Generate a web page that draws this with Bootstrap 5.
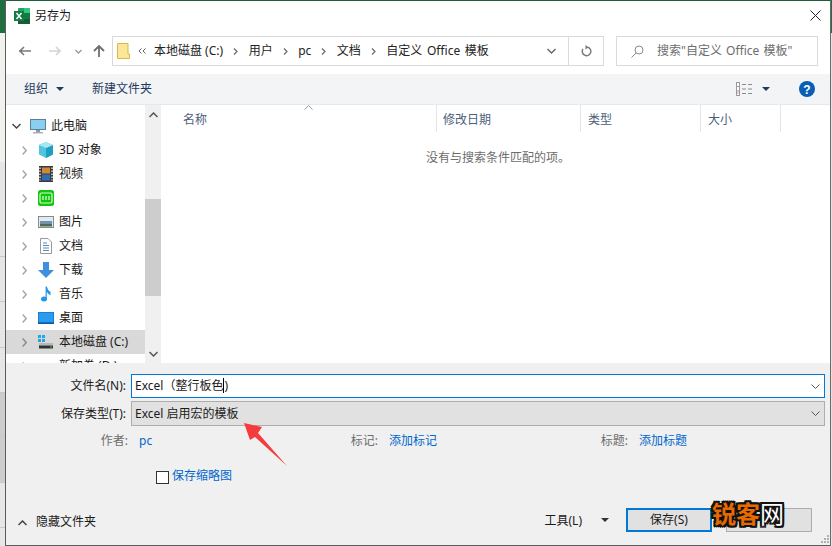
<!DOCTYPE html>
<html lang="zh-CN">
<head>
    <meta charset="UTF-8">
    <title>另存为</title>
    <link href="https://cdn.jsdelivr.net/npm/bootstrap@5.3.0/dist/css/bootstrap.min.css" rel="stylesheet">
    <style>
        html, body { width: 832px; height: 546px; overflow: hidden; }
        body { background: #e6e6e6; font: 12px/16px "Noto Sans", "Noto Sans CJK SC", sans-serif; color: #1a1a1a; position: relative; }
        svg { display: block; flex: none; }
        /* 窗口后面露出的 Excel 表格 */
        .back-strip { position: absolute; left: 0; top: 0; width: 5px; height: 546px; }
        .back-strip div { border-bottom: 1px solid #c8c8c8; }
        .bs-green { height: 33px; background: #1e6e42; border: 0 !important; }
        .bs-light { height: 129px; background: #f3f1ee; border: 0 !important; }
        .bs-a { height: 95px; background: #e6e6e6; }
        .bs-b { height: 45px; background: #e6e6e6; }
        .bs-c { height: 46px; background: #e6e6e6; }
        .bs-d { height: 45px; background: #e6e6e6; }
        .bs-e { height: 44px; background: #cdcdcd; }
        .bs-f { height: 46px; background: #cdcdcd; }
        .bs-g { height: 45px; background: #e6e6e6; }
        .right-strip { position: absolute; left: 831px; top: 33px; width: 1px; height: 513px; background: #e4e2e2; }
        .right-green { position: absolute; left: 826px; top: 0; width: 6px; height: 33px; background: #1e6e42; }
        .dlg { position: relative; margin-left: 5px; width: 826px; height: 546px; background: #fff; border-left: 1px solid #5c5c5c; border-right: 1px solid #6a6a6a; border-top: 1px solid #1e5c3a; border-bottom: 1px solid #5c5c5c; display: flex; flex-direction: column; }
        .title-row { height: 32px; padding: 0 9px 3px 8px; gap: 5px; }
        .addr-row { height: 41px; padding: 3px 12px 8px 13px; }
        .nav-fwd { margin-left: 18px; }
        .nav-down { margin-left: 14px; }
        .nav-up { margin-left: 11px; }
        .addr-box { width: 492px; height: 30px; margin-left: 7px; border: 1px solid #d9d9d9; padding-left: 4px; }
        .crumb { color: #222; margin-left: 10.500px; }
        .crumb-first { margin-left: 8px; }
        .crumb-last { word-spacing: 1.500px; }
        .crumb-sep { margin-left: 10px; }
        .addr-drop { margin-left: auto; width: 34px; height: 28px; border-right: 1px solid #d9d9d9; }
        .addr-ref { width: 34px; height: 28px; }
        .search-box { width: 202px; height: 30px; margin-left: 12px; border: 1px solid #d9d9d9; color: #6d6d6d; padding-left: 14px; gap: 13px; word-spacing: 1px; }
        .tool-row { height: 31px; background: #f3f4f6; border-bottom: 1px solid #e8e8e8; padding: 0 15px 0 18px; color: #1e3a5f; }
        .tool-new { margin-left: 28px; }
        .main-row { height: 258px; }
        .nav-pane { width: 139px; height: 258px; overflow: hidden; padding-top: 9px; flex: none; }
        .tree-row { height: 24px; padding-left: 6px; gap: 5px; }
        .tree-row > svg:first-child { margin-right: 4px; }
        .tree-row.indent { padding-left: 16px; }
        .tree-row.indent > svg:first-child { margin-right: 6px; }
        .tree-row.sel { background: #d9d9d9; }
        .scroll-pane { width: 16px; height: 258px; background: #f0f0f0; flex: none; }
        .scroll-top { height: 20px; }
        .scroll-thumb { height: 97px; margin-top: 74px; background: #cdcdcd; }
        .scroll-foot { height: 18px; margin-top: auto; }
        .list-pane { flex: 1; padding-left: 2px; }
        .head-row { height: 27px; position: relative; color: #4c607a; }
        .col-cell { height: 27px; padding: 3px 0 0 7px; border-right: 1px solid #e5e5e5; }
        .c-name { width: 274px; padding-left: 20px; }
        .c-date { width: 144px; padding-left: 6px; }
        .c-type { width: 120px; }
        .c-size { width: 80px; }
        .sort-mark { position: absolute; left: 141px; top: 0; }
        .empty-msg { color: #6d6d6d; text-align: center; margin: 18px 0 0 10px; width: 650px; }
        .panel { flex: 1; background: #f0f0f0; position: relative; }
        .form-lab { width: 120px; text-align: right; }
        .file-input { width: 694px; height: 24px; margin-left: 5px; background: #fff; border: 1px solid #0078d7; padding-left: 3px; }
        .type-input { width: 694px; height: 25px; margin-left: 5px; background: #e1e1e1; border: 1px solid #adadad; padding-left: 3px; }
        .line-file { margin-top: 11px; }
        .line-type { margin-top: 3px; }
        .caret-bar { display: inline-block; width: 1px; height: 15px; background: #000; vertical-align: -3px; }
        .meta-row { height: 16px; margin-top: 7px; color: #6d6d6d; }
        .meta-cell { width: 250px; }
        .meta-lab { width: 122px; text-align: right; }
        .meta-val { color: #0066cc; margin-left: 11px; }
        .thumb-row { margin: 19px 0 0 150px; height: 16px; gap: 3px; }
        .box-chk { width: 13px; height: 13px; margin-top: 3px; background: #fff; border: 1px solid #333; }
        .link-blue { color: #0066cc; }
        .foot-row { position: absolute; left: 0; right: 0; top: 144px; height: 26px; padding-left: 12px; }
        .hide-chev { margin-top: 5px; }
        .hide-txt { margin: 4px 0 0 9px; }
        .tool-txt { margin: 1px 0 0 auto; }
        .tool-caret { margin: 0 17px 0 19px; }
        .win-btn { width: 86px; height: 24px; background: #e1e1e1; border: 1px solid #adadad; text-align: center; line-height: 22px; }
        .win-btn.main-btn { border: 2px solid #0078d7; line-height: 20px; margin-right: 14px; }
        .spacer-r { width: 18px; }
        .grip { position: absolute; right: 1px; bottom: 2px; }
        .red-arrow { position: absolute; left: 240px; top: 421px; z-index: 5; }
        .brand { position: absolute; left: 712px; top: 498px; z-index: 5; font: 700 24px/30px "Noto Sans CJK SC", sans-serif; color: #e66a00; text-shadow: 2px 0 #111, -2px 0 #111, 0 2px #111, 0 -2px #111, 2px 2px #111, -2px 2px #111, 2px -2px #111, -2px -2px #111; }
        .brand-w { color: #fff; font-weight: 400; }
    </style>
</head>
<body>
<div class="back-strip">
    <div class="bs-green"></div>
    <div class="bs-light"></div>
    <div class="bs-a"></div>
    <div class="bs-b"></div>
    <div class="bs-c"></div>
    <div class="bs-d"></div>
    <div class="bs-e"></div>
    <div class="bs-f"></div>
    <div class="bs-g"></div>
</div>
<div class="right-green"></div>
<div class="right-strip"></div>

<div class="dlg">
    <!-- 标题栏 -->
    <div class="title-row d-flex align-items-center">
        <svg width="16" height="16" viewBox="0 0 16 16">
            <rect x="4" y="0" width="12" height="16" rx="1" fill="#21a366"/>
            <rect x="10" y="0" width="6" height="5" fill="#33c481"/>
            <rect x="4" y="10.500" width="12" height="5.500" fill="#185c37"/>
            <rect x="10" y="5" width="6" height="5.500" fill="#107c41"/>
            <rect x="0" y="3" width="10" height="10" fill="#107c41"/>
            <path d="M2.500 5 L7.500 11 M7.500 5 L2.500 11" stroke="#fff" stroke-width="1.500"/>
        </svg>
        <span>另存为</span>
        <svg class="ms-auto" width="11" height="11" viewBox="0 0 11 11"><path d="M0.500 0.500 L10.500 10.500 M10.500 0.500 L0.500 10.500" stroke="#222" stroke-width="1"/></svg>
    </div>

    <!-- 地址栏 -->
    <div class="addr-row d-flex align-items-center">
        <svg width="12" height="10" viewBox="0 0 12 10"><path d="M0 5 H12 M5 1 L1 5 L5 9" fill="none" stroke="#7a7a7a" stroke-width="1.600"/></svg>
        <svg class="nav-fwd" width="12" height="10" viewBox="0 0 12 10"><path d="M0 5 H12 M7 1 L11 5 L7 9" fill="none" stroke="#d4d4d4" stroke-width="1.600"/></svg>
        <svg class="nav-down" width="7" height="5" viewBox="0 0 7 5"><path d="M0.500 1 L3.500 4 L6.500 1" fill="none" stroke="#9a9a9a" stroke-width="1.300"/></svg>
        <svg class="nav-up" width="12" height="12" viewBox="0 0 12 12"><path d="M6 12 V1 M1 6 L6 1 L11 6" fill="none" stroke="#6e6e6e" stroke-width="1.800"/></svg>
        <div class="addr-box d-flex align-items-center">
            <svg width="13" height="16" viewBox="0 0 13 16"><path d="M0.500 1 Q0.500 0.500 1 0.500 H11 V11 H12.500 V15.500 H1 Q0.500 15.500 0.500 15 Z" fill="#fbe69a" stroke="#dcb748"/></svg>
            <svg class="ms-2" width="8" height="6" viewBox="0 0 8 6"><path d="M3.500 0.500 L1 3 L3.500 5.500 M7.500 0.500 L5 3 L7.500 5.500" fill="none" stroke="#666" stroke-width="1"/></svg>
            <span class="crumb crumb-first">本地磁盘 (C:)</span>
            <svg class="crumb-sep" width="5" height="7" viewBox="0 0 5 7"><path d="M1 0.500 L4 3.500 L1 6.500" fill="none" stroke="#666" stroke-width="1.200"/></svg>
            <span class="crumb">用户</span>
            <svg class="crumb-sep" width="5" height="7" viewBox="0 0 5 7"><path d="M1 0.500 L4 3.500 L1 6.500" fill="none" stroke="#666" stroke-width="1.200"/></svg>
            <span class="crumb">pc</span>
            <svg class="crumb-sep" width="5" height="7" viewBox="0 0 5 7"><path d="M1 0.500 L4 3.500 L1 6.500" fill="none" stroke="#666" stroke-width="1.200"/></svg>
            <span class="crumb">文档</span>
            <svg class="crumb-sep" width="5" height="7" viewBox="0 0 5 7"><path d="M1 0.500 L4 3.500 L1 6.500" fill="none" stroke="#666" stroke-width="1.200"/></svg>
            <span class="crumb crumb-last">自定义 Office 模板</span>
            <div class="addr-drop d-flex align-items-center justify-content-center">
                <svg width="9" height="6" viewBox="0 0 9 6"><path d="M0.500 1 L4.500 5 L8.500 1" fill="none" stroke="#666" stroke-width="1.400"/></svg>
            </div>
            <div class="addr-ref d-flex align-items-center justify-content-center">
                <svg width="11" height="12" viewBox="0 0 11 12"><path d="M6.500 2.200 A4.300 4.300 0 1 1 2 4" fill="none" stroke="#777" stroke-width="1.400"/><path d="M4.500 0 L7.500 2.200 L4.500 4.500 Z" fill="#777"/></svg>
            </div>
        </div>
        <div class="search-box d-flex align-items-center">
            <svg width="13" height="13" viewBox="0 0 13 13"><circle cx="8" cy="5" r="4" fill="none" stroke="#8a8a8a"/><path d="M5 8 L0.500 12.500" stroke="#8a8a8a"/></svg>
            <span>搜索"自定义 Office 模板"</span>
        </div>
    </div>

    <!-- 工具栏 -->
    <div class="tool-row d-flex align-items-center">
        <span>组织</span>
        <svg class="ms-2" width="8" height="4" viewBox="0 0 8 4"><path d="M0 0 H8 L4 4 Z" fill="#1e3a5f"/></svg>
        <span class="tool-new">新建文件夹</span>
        <svg class="ms-auto" width="16" height="14" viewBox="0 0 16 14">
            <rect x="0.500" y="0.500" width="3" height="13" fill="#fff" stroke="#9a9a9a"/>
            <path d="M0.500 4.500 H3.500 M0.500 9 H3.500" stroke="#9a9a9a"/>
            <rect x="1.500" y="10.500" width="1" height="1" fill="#d33"/>
            <path d="M6 2.500 H10 M12 2.500 H16 M6 7 H10 M12 7 H16 M6 11.500 H10 M12 11.500 H16" stroke="#8a8a8a"/>
        </svg>
        <svg style="margin-left:10px" width="8" height="4" viewBox="0 0 8 4"><path d="M0 0 H8 L4 4 Z" fill="#1e3a5f"/></svg>
        <svg style="margin-left:29px" width="16" height="16" viewBox="0 0 16 16"><circle cx="8" cy="8" r="8" fill="#0a5fb4"/><text x="8" y="12.500" text-anchor="middle" font-family="Liberation Sans" font-weight="700" font-size="12" fill="#fff">?</text></svg>
    </div>

    <!-- 主体 -->
    <div class="main-row d-flex">
        <div class="nav-pane">
            <div class="tree-row d-flex align-items-center">
                <svg width="9" height="6" viewBox="0 0 9 6"><path d="M0.500 1 L4.500 5 L8.500 1" fill="none" stroke="#444" stroke-width="1.400"/></svg>
                <svg width="16" height="15" viewBox="0 0 16 15"><rect x="0.500" y="0.500" width="15" height="10" fill="#8ccdf2" stroke="#5b7f9a"/><rect x="6" y="11" width="4" height="2" fill="#8a9aa6"/><rect x="3" y="13" width="10" height="1.500" fill="#a8b4bd"/></svg>
                <span>此电脑</span>
            </div>
            <div class="tree-row indent d-flex align-items-center">
                <svg width="5" height="9" viewBox="0 0 5 9"><path d="M0.700 0.500 L4.200 4.500 L0.700 8.500" fill="none" stroke="#a6a6a6" stroke-width="1.400"/></svg>
                <svg width="16" height="16" viewBox="0 0 16 16"><path d="M8 0 L15 3 V12.500 L8 16 L1 12.500 V3 Z" fill="#4fc6dc"/><path d="M8 6 L15 3 V12.500 L8 16 Z" fill="#1fa0c2"/><path d="M8 0 L15 3 L8 6 L1 3 Z" fill="#a5e8f2"/></svg>
                <span>3D 对象</span>
            </div>
            <div class="tree-row indent d-flex align-items-center">
                <svg width="5" height="9" viewBox="0 0 5 9"><path d="M0.700 0.500 L4.200 4.500 L0.700 8.500" fill="none" stroke="#a6a6a6" stroke-width="1.400"/></svg>
                <svg width="16" height="16" viewBox="0 0 16 16"><rect x="1" y="0" width="14" height="16" fill="#3a3a3a"/><rect x="4" y="1.500" width="8" height="6" fill="#c98a3a"/><rect x="4" y="8.500" width="8" height="6" fill="#2f6db5"/><path d="M2 1.500 V14.500 M14 1.500 V14.500" stroke="#ddd" stroke-width="1.500" stroke-dasharray="1.500 1.500"/></svg>
                <span>视频</span>
            </div>
            <div class="tree-row indent d-flex align-items-center">
                <svg width="5" height="9" viewBox="0 0 5 9"><path d="M0.700 0.500 L4.200 4.500 L0.700 8.500" fill="none" stroke="#a6a6a6" stroke-width="1.400"/></svg>
                <svg width="16" height="16" viewBox="0 0 16 16"><rect width="16" height="16" rx="2.500" fill="#10c60c"/><rect x="2" y="3" width="12" height="10" rx="1.500" fill="none" stroke="#d8f8d0" stroke-width="1.200"/><path d="M5 6 V10 M8 6 V10 M11 6 V10" stroke="#e8ffe0" stroke-width="1.200"/></svg>
            </div>
            <div class="tree-row indent d-flex align-items-center">
                <svg width="5" height="9" viewBox="0 0 5 9"><path d="M0.700 0.500 L4.200 4.500 L0.700 8.500" fill="none" stroke="#a6a6a6" stroke-width="1.400"/></svg>
                <svg width="16" height="12" viewBox="0 0 16 12"><rect x="0.500" y="0.500" width="15" height="11" fill="#dfeaf3" stroke="#8a8a8a"/><rect x="2" y="5" width="12" height="3" fill="#6f93ad"/><rect x="2" y="8" width="12" height="2.500" fill="#4d6b52"/></svg>
                <span>图片</span>
            </div>
            <div class="tree-row indent d-flex align-items-center">
                <svg width="5" height="9" viewBox="0 0 5 9"><path d="M0.700 0.500 L4.200 4.500 L0.700 8.500" fill="none" stroke="#a6a6a6" stroke-width="1.400"/></svg>
                <svg width="16" height="16" viewBox="0 0 16 16"><path d="M2.500 0.500 H10 L13.500 4 V15.500 H2.500 Z" fill="#fff" stroke="#9a9a9a"/><path d="M5 5 H9 M5 7.500 H11 M5 10 H11 M5 12.500 H11" stroke="#4a8fc0"/></svg>
                <span>文档</span>
            </div>
            <div class="tree-row indent d-flex align-items-center">
                <svg width="5" height="9" viewBox="0 0 5 9"><path d="M0.700 0.500 L4.200 4.500 L0.700 8.500" fill="none" stroke="#a6a6a6" stroke-width="1.400"/></svg>
                <svg width="16" height="16" viewBox="0 0 16 16"><path d="M5 0 H11 V8 H16 L8 16 L0 8 H5 Z" fill="#3f8fdf"/></svg>
                <span>下载</span>
            </div>
            <div class="tree-row indent d-flex align-items-center">
                <svg width="5" height="9" viewBox="0 0 5 9"><path d="M0.700 0.500 L4.200 4.500 L0.700 8.500" fill="none" stroke="#a6a6a6" stroke-width="1.400"/></svg>
                <svg width="16" height="16" viewBox="0 0 16 16"><ellipse cx="6" cy="13" rx="3" ry="2.500" fill="#2396ea"/><path d="M7.600 13 V0.500 H8.800 Q9.500 4 12.500 6 V9.500 Q10 7.500 8.800 6 V13 Z" fill="#2396ea"/></svg>
                <span>音乐</span>
            </div>
            <div class="tree-row indent d-flex align-items-center">
                <svg width="5" height="9" viewBox="0 0 5 9"><path d="M0.700 0.500 L4.200 4.500 L0.700 8.500" fill="none" stroke="#a6a6a6" stroke-width="1.400"/></svg>
                <svg width="16" height="12" viewBox="0 0 16 12"><rect width="16" height="12" fill="#1a7fd6"/><rect x="1" y="1" width="14" height="9" fill="#2a9cf0"/><rect x="0" y="10.500" width="16" height="1.500" fill="#0b5da8"/></svg>
                <span>桌面</span>
            </div>
            <div class="tree-row indent sel d-flex align-items-center">
                <svg width="5" height="9" viewBox="0 0 5 9"><path d="M0.700 0.500 L4.200 4.500 L0.700 8.500" fill="none" stroke="#8a8a8a" stroke-width="1.400"/></svg>
                <svg width="16" height="14" viewBox="0 0 16 14"><rect x="0" y="0" width="3" height="3" fill="#1fa7e8"/><rect x="4" y="0" width="3" height="3" fill="#1fa7e8"/><rect x="0" y="4" width="3" height="3" fill="#1fa7e8"/><rect x="4" y="4" width="3" height="3" fill="#1fa7e8"/><rect x="1" y="8" width="14" height="2.500" fill="#b8b8b8"/><rect x="1" y="10.500" width="14" height="3" fill="#333"/><rect x="12" y="11.500" width="2" height="1" fill="#3ed04a"/></svg>
                <span>本地磁盘 (C:)</span>
            </div>
            <div class="tree-row indent d-flex align-items-center">
                <svg width="5" height="9" viewBox="0 0 5 9"><path d="M0.700 0.500 L4.200 4.500 L0.700 8.500" fill="none" stroke="#a6a6a6" stroke-width="1.400"/></svg>
                <svg width="16" height="14" viewBox="0 0 16 14"><rect x="1" y="8" width="14" height="2.500" fill="#b8b8b8"/></svg>
                <span>新加卷 (D:)</span>
            </div>
        </div>
        <div class="scroll-pane d-flex flex-column">
            <div class="scroll-top d-flex align-items-center justify-content-center">
                <svg width="9" height="6" viewBox="0 0 9 6"><path d="M0.500 5 L4.500 1 L8.500 5" fill="none" stroke="#555" stroke-width="1.500"/></svg>
            </div>
            <div class="scroll-thumb"></div>
            <div class="scroll-foot d-flex align-items-center justify-content-center">
                <svg width="9" height="6" viewBox="0 0 9 6"><path d="M0.500 1 L4.500 5 L8.500 1" fill="none" stroke="#555" stroke-width="1.500"/></svg>
            </div>
        </div>
        <div class="list-pane">
            <div class="head-row d-flex">
                <svg class="sort-mark" width="9" height="5" viewBox="0 0 9 5"><path d="M0.500 4.500 L4.500 0.500 L8.500 4.500" fill="none" stroke="#999"/></svg>
                <div class="col-cell c-name d-flex align-items-center">名称</div>
                <div class="col-cell c-date d-flex align-items-center">修改日期</div>
                <div class="col-cell c-type d-flex align-items-center">类型</div>
                <div class="col-cell c-size d-flex align-items-center">大小</div>
            </div>
            <div class="empty-msg">没有与搜索条件匹配的项。</div>
        </div>
    </div>

    <!-- 底部表单 -->
    <div class="panel">
        <div class="line-file d-flex align-items-center">
            <span class="form-lab">文件名(N):</span>
            <div class="file-input d-flex align-items-center">
                <span>Excel（整行板色<span class="caret-bar"></span>)</span>
                <svg class="ms-auto me-1" width="9" height="5" viewBox="0 0 9 5"><path d="M0.500 0.500 L4.500 4.500 L8.500 0.500" fill="none" stroke="#555"/></svg>
            </div>
        </div>
        <div class="line-type d-flex align-items-center">
            <span class="form-lab">保存类型(T):</span>
            <div class="type-input d-flex align-items-center">
                <span>Excel 启用宏的模板</span>
                <svg class="ms-auto me-1" width="9" height="5" viewBox="0 0 9 5"><path d="M0.500 0.500 L4.500 4.500 L8.500 0.500" fill="none" stroke="#555"/></svg>
            </div>
        </div>
        <div class="meta-row d-flex">
            <div class="meta-cell d-flex"><span class="meta-lab">作者:</span><span class="meta-val">pc</span></div>
            <div class="meta-cell d-flex"><span class="meta-lab">标记:</span><span class="meta-val">添加标记</span></div>
            <div class="meta-cell d-flex"><span class="meta-lab">标题:</span><span class="meta-val">添加标题</span></div>
        </div>
        <div class="thumb-row d-flex align-items-center">
            <span class="box-chk"></span>
            <span class="link-blue">保存缩略图</span>
        </div>
        <div class="foot-row d-flex align-items-center">
            <svg class="hide-chev" width="9" height="6" viewBox="0 0 9 6"><path d="M0.500 5 L4.500 1 L8.500 5" fill="none" stroke="#444" stroke-width="1.500"/></svg>
            <span class="hide-txt">隐藏文件夹</span>
            <span class="tool-txt">工具(L)</span>
            <svg class="tool-caret" width="8" height="4" viewBox="0 0 8 4"><path d="M0 0 H8 L4 4 Z" fill="#333"/></svg>
            <div class="win-btn main-btn">保存(S)</div>
            <div class="win-btn"></div>
            <div class="spacer-r"></div>
        </div>
        <svg class="grip" width="9" height="9" viewBox="0 0 9 9"><path d="M7 1 h2 v2 h-2 z M4 4 h2 v2 h-2 z M7 4 h2 v2 h-2 z M1 7 h2 v2 h-2 z M4 7 h2 v2 h-2 z M7 7 h2 v2 h-2 z" fill="#b0b0b0"/></svg>
    </div>
</div>

<!-- 标注箭头和水印 -->
<svg class="red-arrow" width="50" height="48" viewBox="0 0 50 48"><path d="M4 2 L22 6 L18 12 L47 45 L15 16 L10 19 Z" fill="#f53b3b"/></svg>
<div class="brand">锐客<span class="brand-w">网</span></div>

<script src="https://cdn.jsdelivr.net/npm/bootstrap@5.3.0/dist/js/bootstrap.bundle.min.js"></script>
</body>
</html>
